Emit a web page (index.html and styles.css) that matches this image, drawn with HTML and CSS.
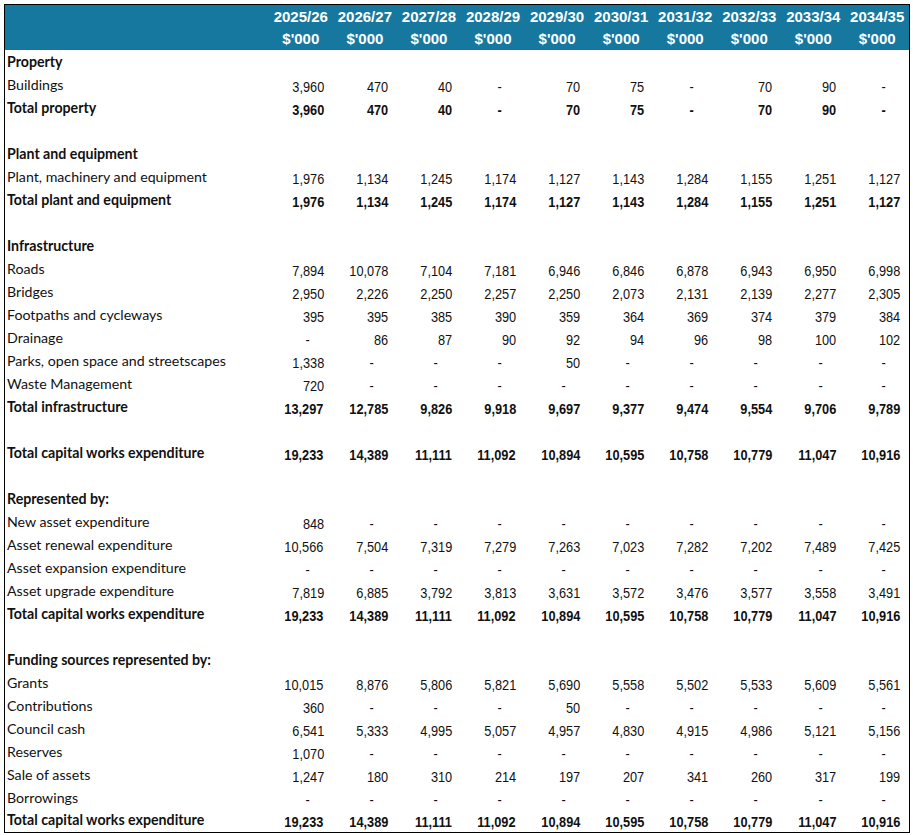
FILE: index.html
```html
<!DOCTYPE html>
<html>
<head>
<meta charset="utf-8">
<link rel="stylesheet" href="styles.css">
</head>
<body>
<table class="sheet">
  <colgroup>
    <col class="c-label">
    <col class="c-num"><col class="c-num"><col class="c-num"><col class="c-num"><col class="c-num">
    <col class="c-num"><col class="c-num"><col class="c-num"><col class="c-num"><col class="c-num">
  </colgroup>
  <thead>
    <tr class="h1"><th></th><th>2025/26</th><th>2026/27</th><th>2027/28</th><th>2028/29</th><th>2029/30</th><th>2030/31</th><th>2031/32</th><th>2032/33</th><th>2033/34</th><th>2034/35</th></tr>
    <tr class="h2"><th></th><th>$'000</th><th>$'000</th><th>$'000</th><th>$'000</th><th>$'000</th><th>$'000</th><th>$'000</th><th>$'000</th><th>$'000</th><th>$'000</th></tr>
  </thead>
  <tbody id="body"></tbody>
</table>
<script src="app.js"></script>
</body>
</html>
```
FILE: app.js
```js
const rows = [
  ["h","Property"],
  ["r","Buildings","3,960","470","40","-","70","75","-","70","90","-"],
  ["t","Total property","3,960","470","40","-","70","75","-","70","90","-"],
  ["b"],
  ["h","Plant and equipment"],
  ["r","Plant, machinery and equipment","1,976","1,134","1,245","1,174","1,127","1,143","1,284","1,155","1,251","1,127"],
  ["t","Total plant and equipment","1,976","1,134","1,245","1,174","1,127","1,143","1,284","1,155","1,251","1,127"],
  ["b"],
  ["h","Infrastructure"],
  ["r","Roads","7,894","10,078","7,104","7,181","6,946","6,846","6,878","6,943","6,950","6,998"],
  ["r","Bridges","2,950","2,226","2,250","2,257","2,250","2,073","2,131","2,139","2,277","2,305"],
  ["r","Footpaths and cycleways","395","395","385","390","359","364","369","374","379","384"],
  ["r","Drainage","-","86","87","90","92","94","96","98","100","102"],
  ["r","Parks, open space and streetscapes","1,338","-","-","-","50","-","-","-","-","-"],
  ["r","Waste Management","720","-","-","-","-","-","-","-","-","-"],
  ["t","Total infrastructure","13,297","12,785","9,826","9,918","9,697","9,377","9,474","9,554","9,706","9,789"],
  ["b"],
  ["t","Total capital works expenditure","19,233","14,389","11,111","11,092","10,894","10,595","10,758","10,779","11,047","10,916"],
  ["b"],
  ["h","Represented by:"],
  ["r","New asset expenditure","848","-","-","-","-","-","-","-","-","-"],
  ["r","Asset renewal expenditure","10,566","7,504","7,319","7,279","7,263","7,023","7,282","7,202","7,489","7,425"],
  ["r","Asset expansion expenditure","-","-","-","-","-","-","-","-","-","-"],
  ["r","Asset upgrade expenditure","7,819","6,885","3,792","3,813","3,631","3,572","3,476","3,577","3,558","3,491"],
  ["t","Total capital works expenditure","19,233","14,389","11,111","11,092","10,894","10,595","10,758","10,779","11,047","10,916"],
  ["b"],
  ["h","Funding sources represented by:"],
  ["r","Grants","10,015","8,876","5,806","5,821","5,690","5,558","5,502","5,533","5,609","5,561"],
  ["r","Contributions","360","-","-","-","50","-","-","-","-","-"],
  ["r","Council cash","6,541","5,333","4,995","5,057","4,957","4,830","4,915","4,986","5,121","5,156"],
  ["r","Reserves","1,070","-","-","-","-","-","-","-","-","-"],
  ["r","Sale of assets","1,247","180","310","214","197","207","341","260","317","199"],
  ["r","Borrowings","-","-","-","-","-","-","-","-","-","-"],
  ["t","Total capital works expenditure","19,233","14,389","11,111","11,092","10,894","10,595","10,758","10,779","11,047","10,916"]
];
const body = document.getElementById("body");
for (const r of rows) {
  const tr = document.createElement("tr");
  const kind = r[0];
  tr.className = kind === "h" ? "row head" : kind === "t" ? "row total" : kind === "b" ? "row blank" : "row";
  const td = document.createElement("td");
  td.className = "label";
  td.textContent = r[1] || "";
  tr.appendChild(td);
  for (let i = 0; i < 10; i++) {
    const c = document.createElement("td");
    const v = r[2 + i];
    c.className = v === "-" ? "num dash" : "num";
    if (v) {
      const s = document.createElement("span");
      s.className = "v";
      s.textContent = v;
      c.appendChild(s);
    }
    tr.appendChild(c);
  }
  body.appendChild(tr);
}
```
FILE: styles.css
```css
html, body { margin: 0; padding: 0; background: #ffffff; }
body { padding: 4px 0 0 4px; }
.sheet {
  border-collapse: collapse;
  table-layout: fixed;
  width: 906px;
  border: 1px solid #000;
}
.c-label { width: 264px; }
.c-num { width: 64px; }
thead tr { background: #17789f; }
thead th {
  color: #fff;
  font-family: "Liberation Sans", Arial, sans-serif;
  font-weight: bold;
  font-size: 15px;
  text-align: center;
  padding: 0;
  line-height: 22px;
  height: 22px;
}
.h1 th { line-height: 23px; height: 23px; }
.row { height: 23px; }
.row td { height: 23px; padding: 0; line-height: 16px; box-sizing: border-box; }
.label {
  font-family: Lato, "Noto Sans", sans-serif;
  font-size: 14.2px;
  color: #111;
  padding-left: 2px !important;
  white-space: nowrap;
  vertical-align: middle;
}
.head .label, .total .label { font-weight: bold; }
.num {
  font-family: "Liberation Sans", Arial, sans-serif;
  font-size: 14.5px;
  color: #111;
  text-align: right;
  padding-right: 9px !important;
  vertical-align: middle;
}
.v {
  display: inline-block;
  transform: scaleX(0.88);
  transform-origin: right center;
  position: relative;
  top: 2px;
}
.total .num { font-weight: bold; }
.num.dash { padding-right: 23px !important; }
```
